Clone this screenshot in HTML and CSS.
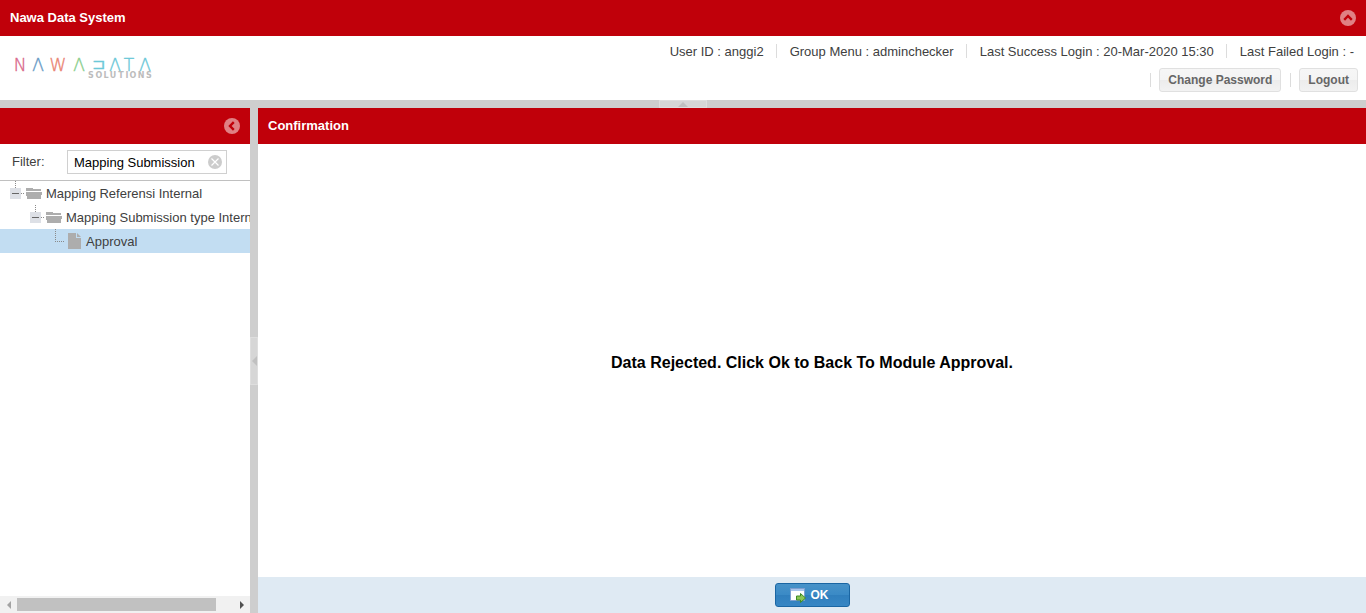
FILE: index.html
```html
<!DOCTYPE html>
<html lang="en">
<head>
<meta charset="utf-8">
<meta name="viewport" content="width=device-width, initial-scale=1">
<title>Nawa Data System</title>
<link rel="stylesheet" href="styles.css">
</head>
<body>
<div class="app">
  <header class="top">
    <div class="bar">
      <h1 class="bar-title">Nawa Data System</h1>
      <button class="tool" type="button" aria-label="Collapse header">
        <svg width="16" height="16" viewBox="0 0 16 16"><circle cx="8" cy="8" r="8" fill="#e08084"/><path d="M4.200 9.800 8 6l3.800 3.800" fill="none" stroke="#c0000a" stroke-width="2.400"/></svg>
      </button>
    </div>
    <div class="account">
      <svg class="logo" width="148" height="30" viewBox="0 0 148 30" role="img" aria-label="Nawadata Solutions">
        <text class="logo-name" y="19"><tspan class="c-pink" x="12">N</tspan><tspan class="c-blue" x="30">Λ</tspan><tspan class="c-coral" x="50">W</tspan><tspan class="c-green" x="71">Λ</tspan></text>
        <text class="logo-name logo-d c-cyan" x="90" y="17">⊐</text>
        <text class="logo-name c-cyan" y="19"><tspan x="107">Λ</tspan><tspan x="121">T</tspan><tspan x="137">Λ</tspan></text>
        <text class="logo-sub" y="26" x="83 91 98 105 113 119 125 133 141">SOLUTIONS</text>
      </svg>
      <div class="account-info">
        <div class="info-row">
          <span>User ID : anggi2</span><i class="sep"></i>
          <span>Group Menu : adminchecker</span><i class="sep"></i>
          <span>Last Success Login : 20-Mar-2020 15:30</span><i class="sep"></i>
          <span>Last Failed Login : -</span>
        </div>
        <div class="action-row">
          <i class="sep"></i><button class="btn" type="button">Change Password</button>
          <i class="sep"></i><button class="btn" type="button">Logout</button>
        </div>
      </div>
    </div>
  </header>

  <div class="split-h">
    <button class="grip grip-h" type="button" aria-label="Collapse top region"><svg width="10" height="5" viewBox="0 0 10 5"><path d="M0 5 5 0l5 5z" fill="#c0c0c0"/></svg></button>
  </div>

  <div class="body">
    <aside class="side">
      <div class="bar bar-side">
        <button class="tool" type="button" aria-label="Collapse menu">
          <svg width="16" height="16" viewBox="0 0 16 16"><circle cx="8" cy="8" r="8" fill="#e08084"/><path d="M9.800 4.200 6 8l3.800 3.800" fill="none" stroke="#c0000a" stroke-width="2.400"/></svg>
        </button>
      </div>
      <div class="filter">
        <label class="filter-label" for="filter">Filter:</label>
        <div class="field">
          <input class="field-input" id="filter" type="text" value="Mapping Submission">
          <button class="clear" type="button" aria-label="Clear filter">
            <svg width="14" height="14" viewBox="0 0 14 14"><circle cx="7" cy="7" r="7" fill="#cccccc"/><path d="m3.500 3.500 7 7m0-7-7 7" stroke="#fff" stroke-width="1.200"/></svg>
          </button>
        </div>
      </div>
      <ul class="tree">
        <li class="node">
          <svg class="node-icon" width="32" height="24" viewBox="0 0 32 24" shape-rendering="crispEdges"><path d="M5.500 0v7M11 12.500h4" stroke="#8a8a8a" stroke-dasharray="1 1"/><path d="M0 7h11v11H0z" fill="#dde0e6"/><path d="M2 12.500h7" stroke="#666"/><path d="M16 7h6l1 1h8v2H16z" fill="#adadad"/><path d="M16 11h16l-1 7H17z" fill="#adadad"/></svg>
          <span>Mapping Referensi Internal</span>
        </li>
        <li class="node level-2">
          <svg class="node-icon" width="32" height="24" viewBox="0 0 32 24" shape-rendering="crispEdges"><path d="M5.500 0v7M11 12.500h4" stroke="#8a8a8a" stroke-dasharray="1 1"/><path d="M0 7h11v11H0z" fill="#dde0e6"/><path d="M2 12.500h7" stroke="#666"/><path d="M16 7h6l1 1h8v2H16z" fill="#adadad"/><path d="M16 11h16l-1 7H17z" fill="#adadad"/></svg>
          <span>Mapping Submission type Internal</span>
        </li>
        <li class="node level-3 selected">
          <svg class="node-icon" width="32" height="24" viewBox="0 0 32 24"><path d="M5.500 0v12.500H15" fill="none" stroke="#8a8a8a" stroke-dasharray="1 1" shape-rendering="crispEdges"/><path d="M18 4h8v5h5v11H18zM27 4l4 4h-4z" fill="#adadad"/></svg>
          <span>Approval</span>
        </li>
      </ul>
      <div class="scroll">
        <button class="scroll-end" type="button" aria-label="Scroll left"><svg width="4" height="8" viewBox="0 0 4 8"><path d="M4 0v8L0 4z" fill="#a3a3a3"/></svg></button>
        <div class="scroll-track"><div class="scroll-thumb"></div></div>
        <button class="scroll-end" type="button" aria-label="Scroll right"><svg width="4" height="8" viewBox="0 0 4 8"><path d="M0 0v8l4-4z" fill="#505050"/></svg></button>
      </div>
    </aside>

    <div class="split-v">
      <button class="grip grip-v" type="button" aria-label="Collapse left region"><svg width="5" height="10" viewBox="0 0 5 10"><path d="M5 0 0 5l5 5z" fill="#c0c0c0"/></svg></button>
    </div>

    <main class="main">
      <div class="bar"><h2 class="bar-title">Confirmation</h2></div>
      <div class="message"><p class="message-text">Data Rejected. Click Ok to Back To Module Approval.</p></div>
      <footer class="foot">
        <button class="ok" type="button">
          <svg width="16" height="16" viewBox="0 0 16 16"><path d="M.5 1.500h14v12H.5z" fill="#fff" stroke="#7d9fd0"/><path d="M1 2h13v2H1z" fill="#a9c5ec"/><path d="M6.500 9h4V6.500l5 4.500-5 4.500V13h-4z" fill="#8cc653" stroke="#3f8a25"/></svg>
          <span>OK</span>
        </button>
      </footer>
    </main>
  </div>
</div>
</body>
</html>
```
FILE: styles.css
```css
* { box-sizing: border-box; }

body {
  margin: 0;
  font: 13px/17px "Liberation Sans", Arial, sans-serif;
  color: #404040;
  background: #fff;
}

button {
  font: inherit;
  margin: 0;
  padding: 0;
  border: 0;
  background: none;
  cursor: pointer;
}

svg { display: block; flex: none; }

.app {
  display: flex;
  flex-direction: column;
  height: 100vh;
  overflow: hidden;
}

/* Red title bars */
.bar {
  display: flex;
  align-items: center;
  justify-content: space-between;
  height: 36px;
  padding: 0 10px;
  background: #c0000a;
  flex: none;
}
.bar-side { justify-content: flex-end; }
.bar-title {
  margin: 0;
  padding-bottom: 2px;
  font-size: 13px;
  line-height: 17px;
  color: #fff;
}

/* Account area */
.account {
  display: flex;
  justify-content: space-between;
  align-items: flex-start;
  height: 64px;
  padding: 3px 8px 0;
}
.logo { margin-top: 13px; }
.logo-name {
  font-family: "DejaVu Sans", sans-serif;
  font-weight: 200;
  font-size: 17px;
  text-anchor: middle;
  stroke-width: 0.4px;
}
.logo-d { font-size: 16px; }
.c-pink { fill: #d9688c; stroke: #d9688c; }
.c-blue { fill: #6a9cc6; stroke: #6a9cc6; }
.c-coral { fill: #ea8574; stroke: #ea8574; }
.c-green { fill: #8ccf8e; stroke: #8ccf8e; }
.c-cyan { fill: #6cc8d8; stroke: #6cc8d8; }
.logo-sub {
  font-family: "DejaVu Sans", sans-serif;
  font-size: 8px;
  font-weight: bold;
  text-anchor: middle;
  fill: #bcbcbc;
}
.account-info {
  display: flex;
  flex-direction: column;
  align-items: flex-end;
  gap: 5px;
}
.info-row,
.action-row {
  display: flex;
  align-items: center;
  height: 24px;
}
.info-row { gap: 12px; padding-right: 4px; }
.action-row { gap: 8px; }
.sep {
  width: 2px;
  height: 14px;
  border-left: 1px solid #dcdcdc;
}
.action-row .sep { border-left: 0; border-right: 1px solid #dcdcdc; }
.btn {
  height: 24px;
  padding: 0 8px;
  border: 1px solid #e0e0e0;
  border-radius: 3px;
  background: linear-gradient(#f6f6f6, #f4f4f4 50%, #ececec 50%, #f2f2f2);
  color: #666;
  font-size: 12px;
  font-weight: bold;
  line-height: 20px;
}

/* Splitters */
.split-h,
.split-v {
  display: flex;
  align-items: center;
  justify-content: center;
  flex: none;
  background: #cecece;
}
.split-h { height: 8px; }
.split-v { width: 8px; }
.grip {
  display: flex;
  align-items: center;
  justify-content: center;
  border: 1px solid #dedede;
  background: #d6d6d6;
}
.grip-h { width: 48px; height: 8px; }
.grip-v { width: 8px; height: 48px; }

.body { display: flex; flex: 1; min-height: 0; }

/* Menu */
.side {
  display: flex;
  flex-direction: column;
  width: 250px;
  flex: none;
  overflow: hidden;
}
.filter {
  display: flex;
  height: 37px;
  padding: 6px 12px;
  border-bottom: 1px solid #c0c0c0;
  flex: none;
}
.filter-label { width: 55px; line-height: 24px; }
.field {
  display: flex;
  align-items: center;
  width: 160px;
  height: 24px;
  padding: 0 4px 0 6px;
  border: 1px solid #d0d0d0;
}
.field-input {
  flex: 1;
  min-width: 0;
  padding: 0;
  border: 0;
  outline: 0;
  background: none;
  font: inherit;
  color: #000;
}
.tree {
  flex: 1;
  margin: 0;
  padding: 0;
  list-style: none;
  overflow: hidden;
}
.node {
  display: flex;
  align-items: center;
  gap: 4px;
  height: 24px;
  padding-left: 10px;
  white-space: nowrap;
}
.level-2 { padding-left: 30px; }
.level-3 { padding-left: 50px; }
.selected { background: #c2ddf2; }

.scroll { display: flex; height: 17px; background: #f1f1f1; flex: none; }
.scroll-end {
  display: flex;
  align-items: center;
  justify-content: center;
  width: 17px;
}
.scroll-track { flex: 1; padding: 2px 0; }
.scroll-thumb { width: 92%; height: 13px; background: #c1c1c1; }

/* Confirmation panel */
.main { display: flex; flex-direction: column; flex: 1; min-width: 0; }
.message {
  display: flex;
  flex: 1;
  align-items: center;
  justify-content: center;
  padding-top: 4px;
}
.message-text {
  margin: 0;
  font-size: 16px;
  line-height: 20px;
  font-weight: bold;
  color: #000;
}
.foot {
  display: flex;
  align-items: center;
  justify-content: center;
  height: 36px;
  background: #dfeaf3;
  flex: none;
}
.ok {
  display: flex;
  align-items: center;
  justify-content: center;
  gap: 5px;
  width: 75px;
  height: 24px;
  padding-right: 6px;
  border: 1px solid #1a66a3;
  border-radius: 3px;
  background: linear-gradient(#4792c8, #3a8ac6 50%, #307fbd 50%, #3686c4);
  color: #fff;
  font-size: 12px;
  font-weight: bold;
}
```
